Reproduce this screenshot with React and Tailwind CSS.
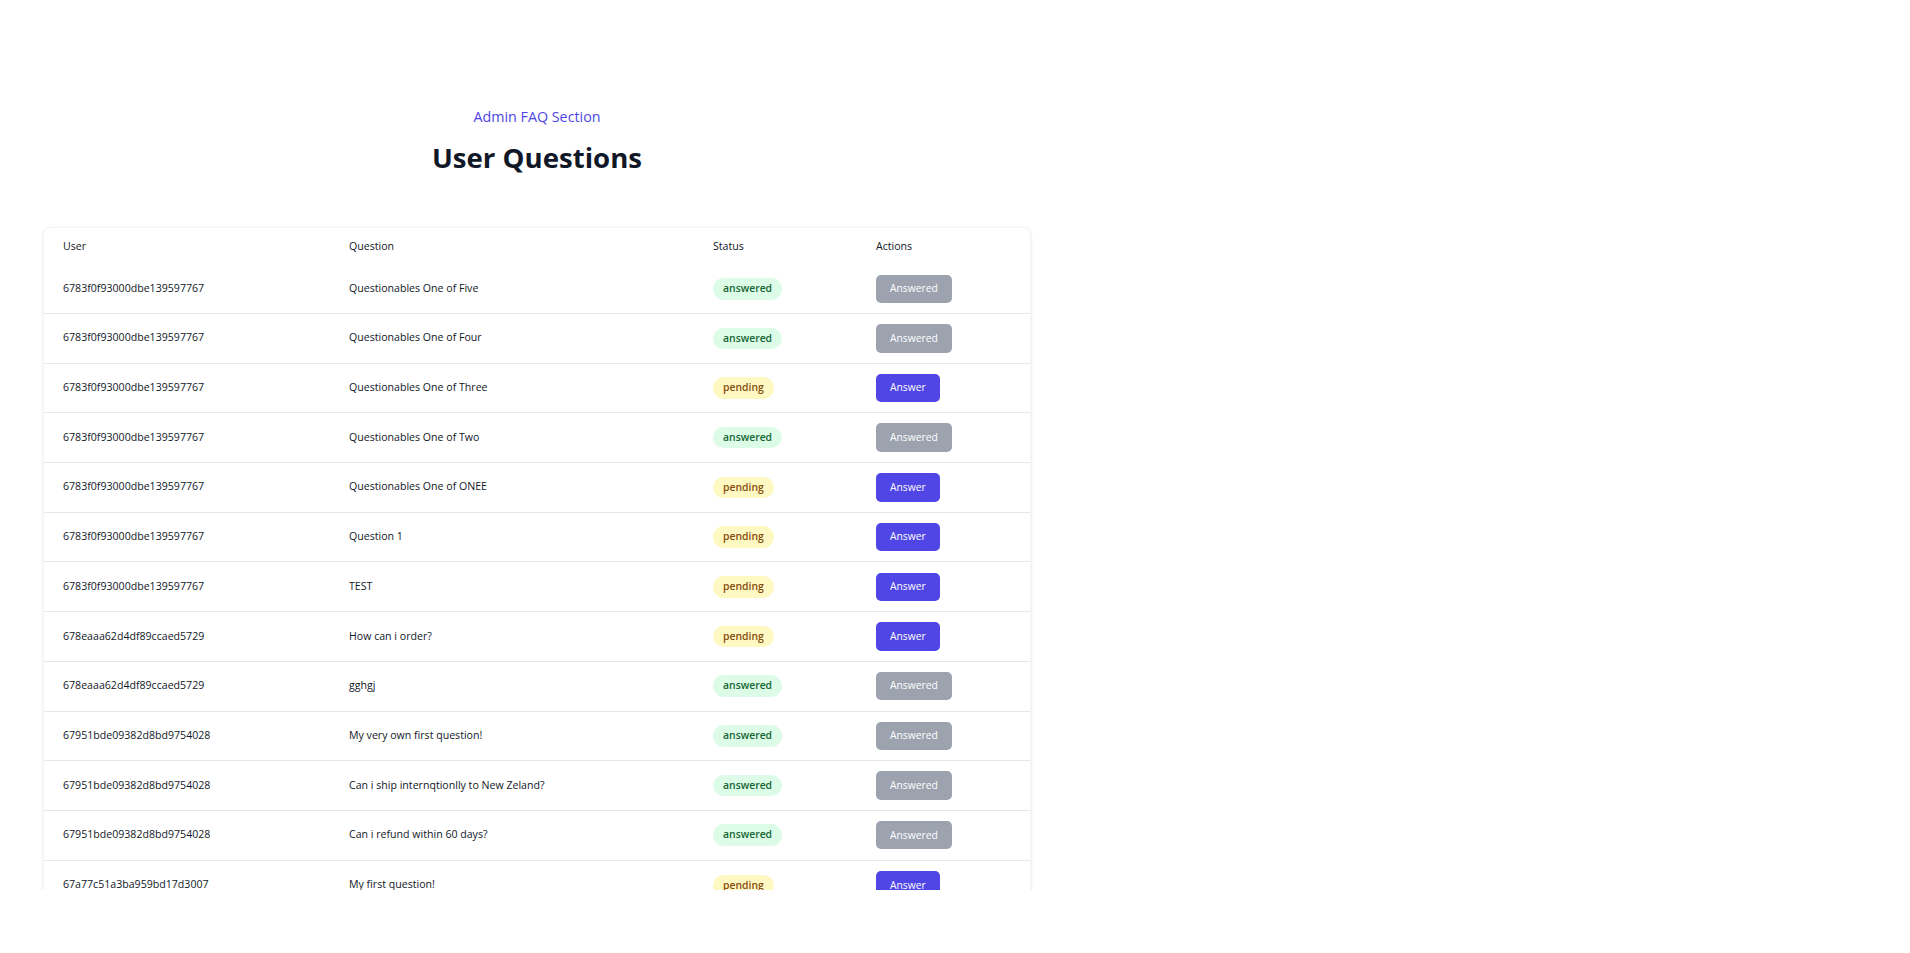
import React from 'react';

const A = '6783f0f93000dbe139597767';
const B = '678eaaa62d4df89ccaed5729';
const C = '67951bde09382d8bd9754028';

const questions = [
  { user: A, text: 'Questionables One of Five', status: 'answered' },
  { user: A, text: 'Questionables One of Four', status: 'answered' },
  { user: A, text: 'Questionables One of Three', status: 'pending' },
  { user: A, text: 'Questionables One of Two', status: 'answered' },
  { user: A, text: 'Questionables One of ONEE', status: 'pending' },
  { user: A, text: 'Question 1', status: 'pending' },
  { user: A, text: 'TEST', status: 'pending' },
  { user: B, text: 'How can i order?', status: 'pending' },
  { user: B, text: 'gghgj', status: 'answered' },
  { user: C, text: 'My very own first question!', status: 'answered' },
  { user: C, text: 'Can i ship internqtionlly to New Zeland?', status: 'answered' },
  { user: C, text: 'Can i refund within 60 days?', status: 'answered' },
  { user: '67a77c51a3ba959bd17d3007', text: 'My first question!', status: 'pending' },
];

function StatusBadge({ status }) {
  const answered = status === 'answered';
  return (
    <span
      className={
        answered
          ? 'inline-flex items-center h-[21.5px] px-[10px] rounded-full bg-[#dcfce7] text-[#166534] text-[10.4px] font-semibold'
          : 'inline-flex items-center h-[21.5px] px-[10px] rounded-full bg-[#fef9c3] text-[#854d0e] text-[10.4px] font-semibold'
      }
    >
      {status}
    </span>
  );
}

function ActionButton({ status }) {
  if (status === 'answered') {
    return (
      <button
        disabled
        className="h-[28.5px] px-[14px] rounded-[5px] bg-[#9ca3af] text-white text-[10.3px] font-medium cursor-not-allowed"
      >
        Answered
      </button>
    );
  }
  return (
    <button className="h-[28.5px] px-[14px] rounded-[5px] bg-[#4f46e5] text-white text-[10.3px] font-medium hover:bg-[#4338ca]">
      Answer
    </button>
  );
}

export default function App() {
  return (
    <div className="min-h-[953px] bg-white font-['Open_Sans',sans-serif]">
      <main className="w-[1074px] h-[890px] overflow-hidden px-[43px] pt-[107px]">
        {/* Encabezado */}
        <div className="text-center">
          <p className="text-[14.3px] leading-[20px] text-[#4f46e5]">Admin FAQ Section</p>
          <h1 className="mt-[12px] text-[27.6px] leading-[36px] font-bold text-[#111827]">User Questions</h1>
        </div>

        {/* Tabla de preguntas */}
        <div className="mt-[52px] bg-white rounded-lg shadow-sm border border-[#f5f5f5]">
          <div className="grid grid-cols-[286px_364px_163px_173px] h-[37px] pt-[1px] items-center text-[10.6px] font-medium text-[#111827]">
            <div className="pl-[19px]">User</div>
            <div className="pl-[19px]">Question</div>
            <div className="pl-[19px]">Status</div>
            <div className="pl-[19px]">Actions</div>
          </div>
          <div className="divide-y divide-[#e5e7eb]">
            {questions.map((q, i) => (
              <div
                key={i}
                className={
                  i === 0
                    ? 'grid grid-cols-[286px_364px_163px_173px] h-[49px] items-center text-[10.6px] text-[#111827]'
                    : 'grid grid-cols-[286px_364px_163px_173px] h-[49.7px] items-center text-[10.6px] text-[#111827]'
                }
              >
                <div className="pl-[19px]">{q.user}</div>
                <div className="pl-[19px]">{q.text}</div>
                <div className="pl-[19px]">
                  <StatusBadge status={q.status} />
                </div>
                <div className="pl-[19px]">
                  <ActionButton status={q.status} />
                </div>
              </div>
            ))}
          </div>
        </div>
      </main>
    </div>
  );
}
